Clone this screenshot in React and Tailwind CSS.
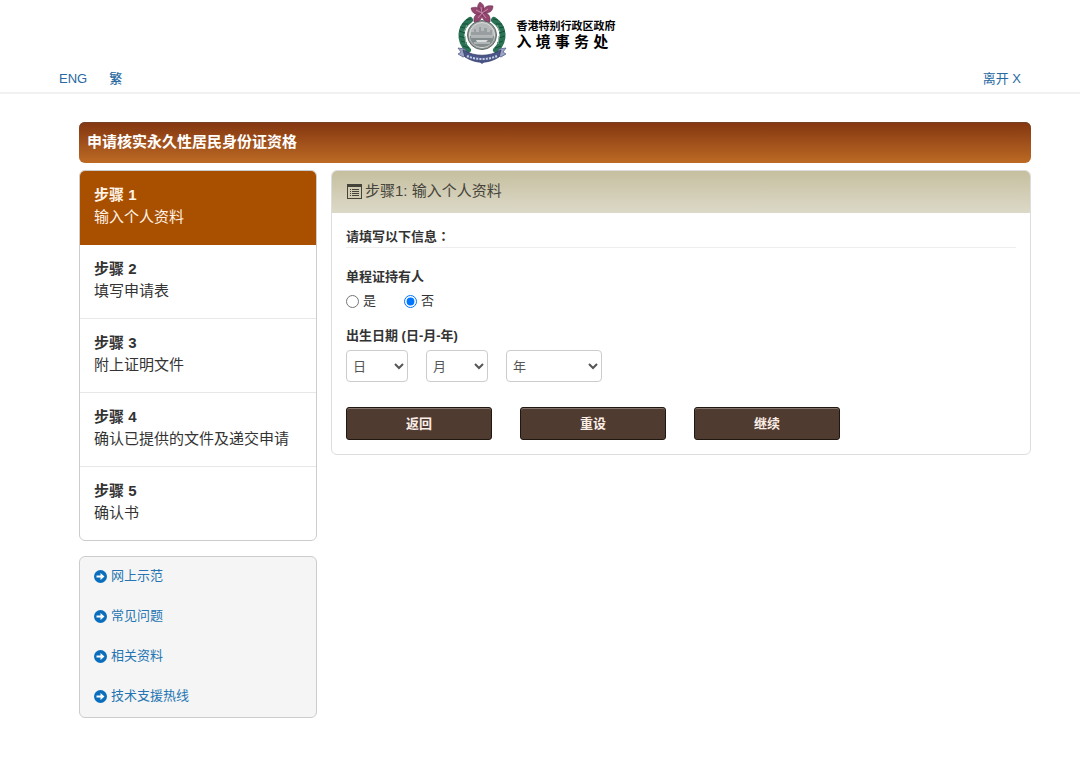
import { useState } from "react";

const steps = [
  { id: 1, title: "步骤 1", label: "输入个人资料" },
  { id: 2, title: "步骤 2", label: "填写申请表" },
  { id: 3, title: "步骤 3", label: "附上证明文件" },
  { id: 4, title: "步骤 4", label: "确认已提供的文件及递交申请" },
  { id: 5, title: "步骤 5", label: "确认书" },
];

const helpLinks = ["网上示范", "常见问题", "相关资料", "技术支援热线"];

const days = Array.from({ length: 31 }, (_, i) => i + 1);
const months = Array.from({ length: 12 }, (_, i) => i + 1);
const years = Array.from({ length: 100 }, (_, i) => 2024 - i);

function Emblem() {
  return (
    <svg width="50" height="62" viewBox="0 0 50 62" aria-hidden="true">
      {/* Laurel wreath */}
      <g fill="none" stroke="#2b7355" strokeWidth="6" strokeLinecap="round">
        <path d="M13 18C3 25 1 38 11 48" />
        <path d="M37 18C47 25 49 38 39 48" />
      </g>
      <g fill="none" stroke="#174f3b" strokeWidth="1">
        <path d="M14 17l-5 1M11 22l-6 0M9 26l-6-1M8 31l-6-2M8 36l-6-2M10 41l-6-2M12 46l-6-2" />
        <path d="M36 17l5 1M39 22l6 0M41 26l6-1M42 31l6-2M42 36l6-2M40 41l6-2M38 46l6-2" />
      </g>
      <path d="M10 23l-3 7M8 34l1 8M40 23l3 7M42 34l-1 8" stroke="#83ad92" strokeWidth="1" />
      {/* Harbour disc */}
      <circle cx="25" cy="33" r="14.5" fill="#929999" stroke="#606d6a" strokeWidth="1" />
      <circle cx="25" cy="33" r="12.5" fill="#b6b9ba" stroke="#dedfda" strokeWidth="1" />
      <path d="M13 34h24v1c0 5-5 10-12 10s-12-5-12-10z" fill="#858c8d" />
      <path d="M14 33v-3h3v-3h2v3h3v-5h2v4h3v-3h3v4h3v-2h2v5z" fill="#999ea0" />
      <path d="M14 35h22M17 41h16" stroke="#d9dddd" strokeWidth="1" />
      <path d="M19 38h12l-2 2h-9z" fill="#d9dddd" />
      {/* Bauhinia */}
      <g fill="#94466f" stroke="#632648" strokeWidth="0.5">
        <path d="M25 11C19 7 20 3 23 0c5 3 5 7 2 11z" />
        <path d="M25 11C27 4 31 3 36 4c0 6-5 8-11 7z" />
        <path d="M25 11c6-1 9 3 8 9-6 0-9-4-8-9z" />
        <path d="M25 11c1 5-2 9-8 9-1-6 2-9 8-9z" />
        <path d="M25 11c-5 3-10 1-11-5 5-2 10 0 11 5z" />
      </g>
      <path d="M25 11l-1-6M25 11l6-4M25 11l4 5M25 11l-4 5M25 11l-6-3" stroke="#d39bb9" strokeWidth="0.8" />
      {/* Ribbon */}
      <path d="M1 46l7 1 3 6-5 2-5-3 3-2zM49 46l-7 1-3 6 5 2 5-3-3-2z" fill="#9ca4c6" stroke="#4b5380" strokeWidth="0.7" />
      <path d="M6 48c12 7 26 7 38 0l-2 7c-11 7-23 7-34 0z" fill="#4b5689" stroke="#313a65" strokeWidth="0.7" />
      <path d="M10 54c9 4 21 4 30 0" fill="none" stroke="#c6cee5" strokeWidth="2" strokeDasharray="2 1.2" />
      <path d="M20 58c3 2 7 2 10 0l-5 4z" fill="#4b5689" />
    </svg>
  );
}

function ArrowIcon() {
  return (
    <svg width="13" height="13" viewBox="0 0 13 13" className="shrink-0" aria-hidden="true">
      <circle cx="6.5" cy="6.5" r="6.5" fill="#0a6ebd" />
      <path d="M2.5 5.4h4V3l4 3.5-4 3.5V7.6h-4z" fill="#fff" />
    </svg>
  );
}

function ListIcon() {
  return (
    <svg width="15" height="15" viewBox="0 0 15 15" className="shrink-0" aria-hidden="true">
      <path d="M0 0h15v15H0z" fill="#45443a" />
      <path d="M1 3h13v11H1z" fill="#d0cbb1" />
      <path d="M3 5h1v1H3zM3 7h1v1H3zM3 9h1v1H3zM3 11h1v1H3zM5 5h7v1H5zM5 7h7v1H5zM5 9h7v1H5zM5 11h7v1H5z" fill="#45443a" />
    </svg>
  );
}

function DateSelect({ label, options, className }) {
  return (
    <select
      aria-label={label}
      defaultValue=""
      className={`h-8 rounded-sm border border-[#ccc] bg-white pl-[2px] text-[13px] text-[#555] ${className}`}
    >
      <option value="">{label}</option>
      {options.map((o) => (
        <option key={o} value={o}>{o}</option>
      ))}
    </select>
  );
}

function FormButton({ type = "button", children }) {
  return (
    <button
      type={type}
      className="h-[33px] w-[146px] rounded-[3px] border border-[#211711] bg-[#503b31] text-[13px] font-bold text-[#fbeee6] shadow-[inset_0_1px_0_#83756d] hover:bg-[#5e483d]"
    >
      {children}
    </button>
  );
}

export default function App() {
  const [holder, setHolder] = useState("no");

  return (
    <div className="min-h-screen bg-white pb-10 font-['Liberation_Sans','Noto_Sans_CJK_SC',sans-serif] text-[13px] text-[#333]">
      <header className="border-b-2 border-[#f1f1f1]">
        <div className="flex items-start justify-center gap-[10px] pt-[2px] pr-2">
          <Emblem />
          <div className="pt-4 font-bold text-black">
            <p className="text-[11px] leading-4">香港特别行政区政府</p>
            <p className="text-[15px] leading-4">入 境 事 务 处</p>
          </div>
        </div>
        <nav className="flex justify-between pt-[3px] pr-[59px] pb-px pl-[59px] leading-6 text-[#28699f]">
          <div className="flex gap-[22px]">
            <a href="#eng" className="hover:underline">ENG</a>
            <a href="#trad" className="font-medium hover:underline">繁</a>
          </div>
          <a href="#exit" className="hover:underline">离开 X</a>
        </nav>
      </header>

      <main className="pt-7 pr-[49px] pl-[79px]">
        <h1 className="rounded-md bg-linear-to-b from-[#833611] to-[#bd6a24] px-2 pt-[7px] pb-[9px] text-[15px] leading-[25px] font-bold text-white shadow-[inset_0_1px_0_#774125]">
          申请核实永久性居民身份证资格
        </h1>

        <div className="mt-[7px] flex items-start gap-[14px]">
          <aside className="w-1/4 shrink-0">
            <ol className="overflow-hidden rounded-md border border-[#ccc]">
              {steps.map((step) => (
                <li
                  key={step.id}
                  className={`border-b px-[14px] pt-[13px] pb-4 text-[15px] leading-[22px] last:border-b-0 ${
                    step.id === 1
                      ? "border-[#a94f00] bg-[#a94f00] text-[#fff3e6]"
                      : "border-[#e7e7e7] text-[#333]"
                  }`}
                >
                  <p className="font-bold">{step.title}</p>
                  <p>{step.label}</p>
                </li>
              ))}
            </ol>

            <ul className="mt-[15px] rounded-md border border-[#ccc] bg-[#f5f5f5]">
              {helpLinks.map((link) => (
                <li key={link}>
                  <a href="#help" className="flex h-10 items-center gap-1 px-[14px] pb-[2px] text-[#2675b2] hover:underline">
                    <ArrowIcon />
                    {link}
                  </a>
                </li>
              ))}
            </ul>
          </aside>

          <section className="min-w-0 flex-1 rounded-md border border-[#ddd]">
            <h2 className="flex h-[42px] items-center gap-[3px] rounded-t-[5px] bg-linear-to-b from-[#c6bf9f] to-[#dcd9c8] px-[15px] pb-[2px] text-[15px] text-[#45443a]">
              <ListIcon />
              步骤1: 输入个人资料
            </h2>

            <form className="px-[14px] pt-[13px] pb-[14px]" onSubmit={(e) => e.preventDefault()}>
              <p className="border-b border-[#eee] leading-5 font-bold">
                请填写以下信息<span className="font-['Noto_Sans_CJK_TC',sans-serif]" lang="zh-Hant">：</span>
              </p>

              <fieldset className="mt-[19px]">
                <legend className="leading-5 font-bold">单程证持有人</legend>
                <div className="mt-1 flex gap-7 leading-5">
                  <label className="flex items-center gap-1">
                    <input type="radio" name="holder" checked={holder === "yes"} onChange={() => setHolder("yes")} />
                    是
                  </label>
                  <label className="flex items-center gap-1">
                    <input type="radio" name="holder" checked={holder === "no"} onChange={() => setHolder("no")} />
                    否
                  </label>
                </div>
              </fieldset>

              <fieldset className="mt-[15px]">
                <legend className="leading-5 font-bold">出生日期 (日-月-年)</legend>
                <div className="mt-1 flex gap-[18px]">
                  <DateSelect label="日" options={days} className="w-[62px]" />
                  <DateSelect label="月" options={months} className="w-[62px]" />
                  <DateSelect label="年" options={years} className="w-24" />
                </div>
              </fieldset>

              <div className="mt-[25px] flex flex-wrap gap-7">
                <FormButton>返回</FormButton>
                <FormButton type="reset">重设</FormButton>
                <FormButton type="submit">继续</FormButton>
              </div>
            </form>
          </section>
        </div>
      </main>
    </div>
  );
}
